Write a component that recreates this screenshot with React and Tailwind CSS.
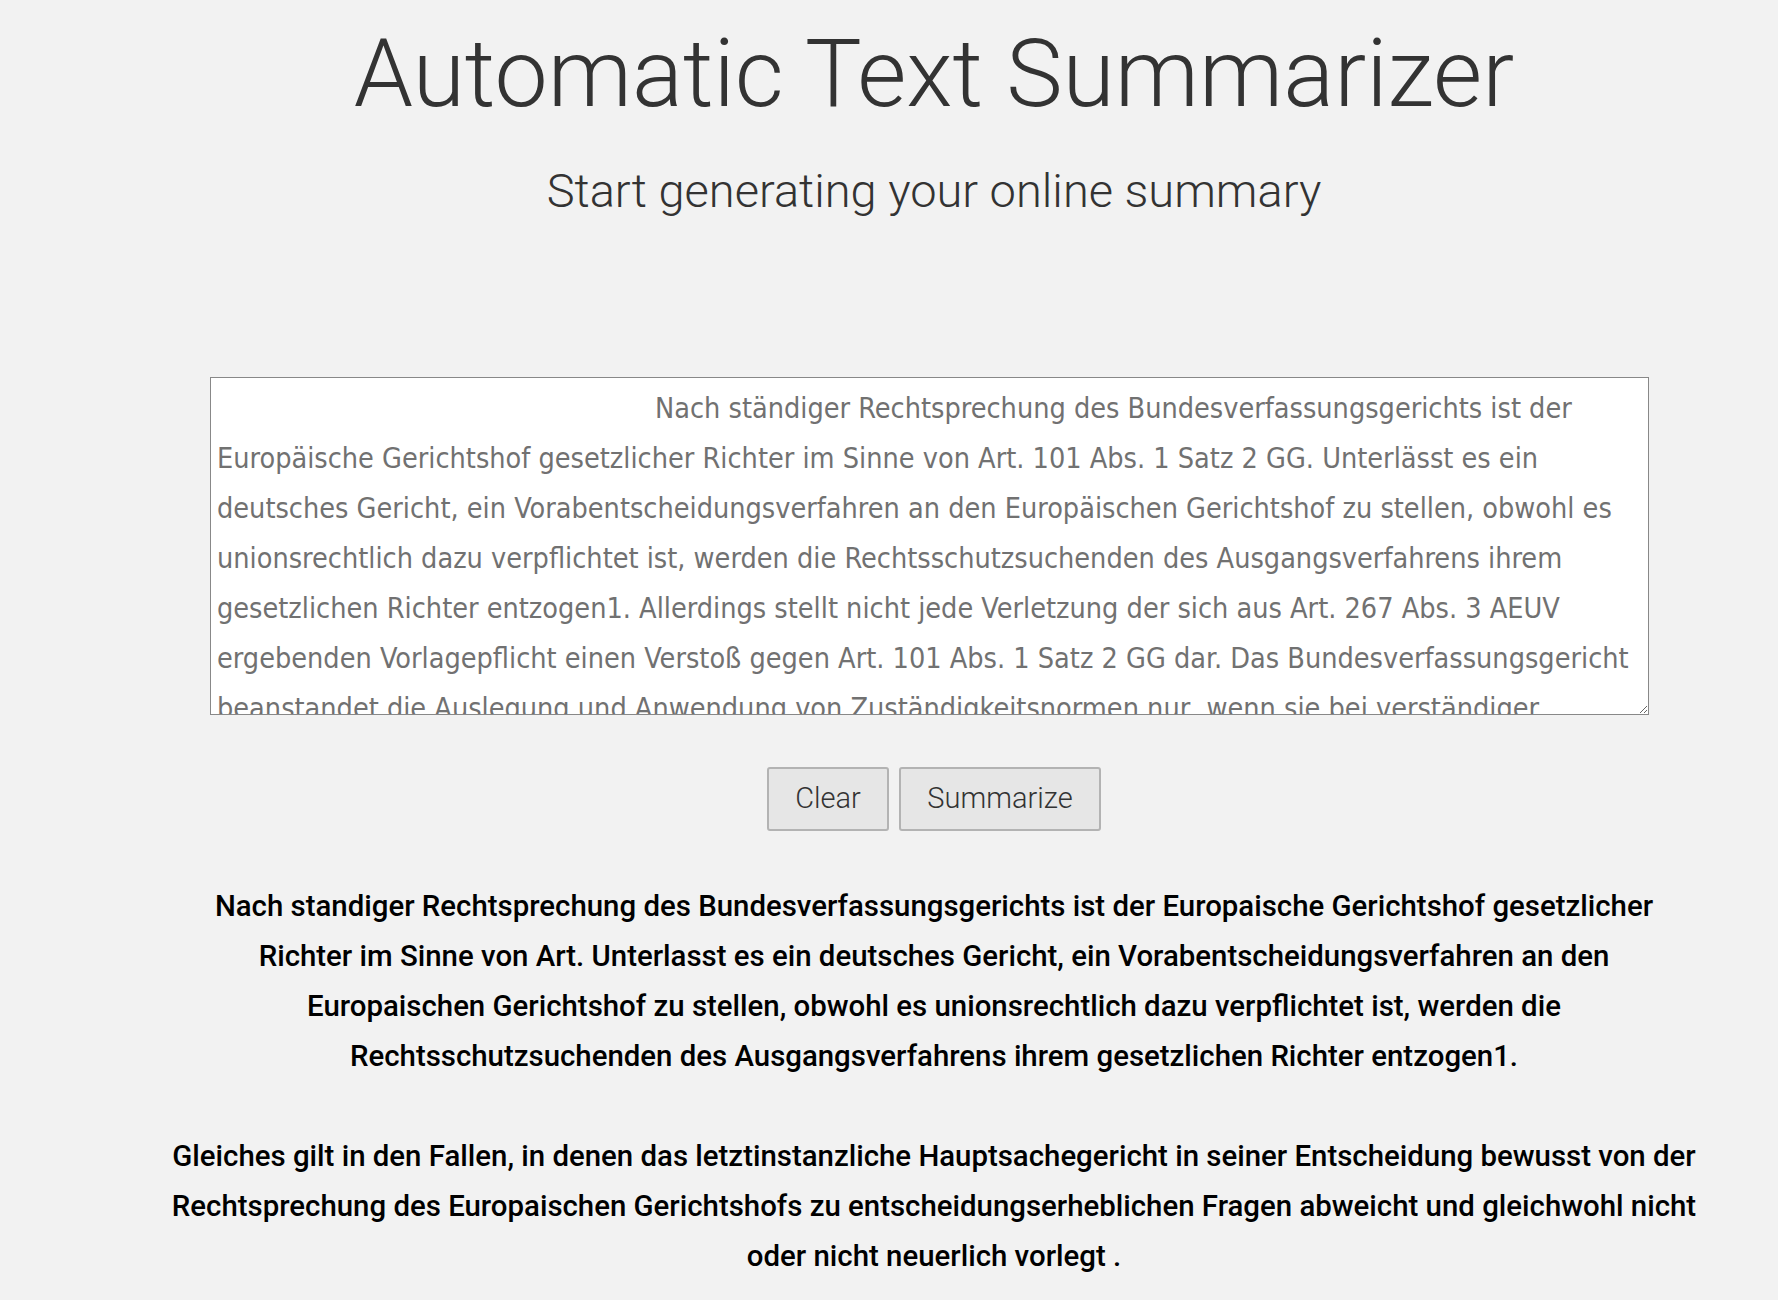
import React from "react";

const TA_TEXT = [
  "Nach ständiger Rechtsprechung des Bundesverfassungsgerichts ist der",
  "Europäische Gerichtshof gesetzlicher Richter im Sinne von Art. 101 Abs. 1 Satz 2 GG. Unterlässt es ein",
  "deutsches Gericht, ein Vorabentscheidungsverfahren an den Europäischen Gerichtshof zu stellen, obwohl es",
  "unionsrechtlich dazu verpflichtet ist, werden die Rechtsschutzsuchenden des Ausgangsverfahrens ihrem",
  "gesetzlichen Richter entzogen1. Allerdings stellt nicht jede Verletzung der sich aus Art. 267 Abs. 3 AEUV",
  "ergebenden Vorlagepflicht einen Verstoß gegen Art. 101 Abs. 1 Satz 2 GG dar. Das Bundesverfassungsgericht",
  "beanstandet die Auslegung und Anwendung von Zuständigkeitsnormen nur, wenn sie bei verständiger",
  "Würdigung der das Grundgesetz bestimmenden Gedanken nicht mehr verständlich erscheinen und",
  "offensichtlich unhaltbar sind.",
].join("\n");

export default function App() {
  return (
    <div className="min-h-[1300px] w-full bg-[#f2f2f2] pl-[90px] font-['Roboto',sans-serif]">
      <div className="flex flex-col items-center">
        <h1 className="mt-[24px] text-[95px] leading-[100px] font-light text-[#333333] whitespace-nowrap">
          Automatic Text Summarizer
        </h1>
        <h2 className="mt-[40px] text-[47px] leading-[54px] font-light text-[#333333] whitespace-nowrap">
          Start generating your online summary
        </h2>
        <textarea
          wrap="off"
          defaultValue={TA_TEXT}
          className="self-start ml-[120px] mt-[159px] block h-[338px] w-[1439px] border border-[#888888] bg-white pl-[6px] pr-[6px] pt-[5px] pb-[3px] indent-[438px] font-['DejaVu_Sans_Condensed','DejaVu_Sans',sans-serif] text-[28.55px] leading-[50px] text-[#717171] outline-none [scrollbar-width:none] overflow-hidden"
        />
        <div className="mt-[52px] flex gap-[10px]">
          <button className="h-[64px] w-[122px] rounded-[3px] border-2 border-[#b3b3b3] bg-[#e6e6e6] text-[29px] font-light text-[#333333]">
            Clear
          </button>
          <button className="h-[64px] w-[202px] rounded-[3px] border-2 border-[#b3b3b3] bg-[#e6e6e6] text-[29px] font-light text-[#333333]">
            Summarize
          </button>
        </div>
        <div className="mt-[50px] text-center text-[29.4px] leading-[50px] font-medium text-black">
          <p className="whitespace-nowrap">
            Nach standiger Rechtsprechung des Bundesverfassungsgerichts ist der Europaische Gerichtshof gesetzlicher
            <br />
            Richter im Sinne von Art. Unterlasst es ein deutsches Gericht, ein Vorabentscheidungsverfahren an den
            <br />
            Europaischen Gerichtshof zu stellen, obwohl es unionsrechtlich dazu verpflichtet ist, werden die
            <br />
            Rechtsschutzsuchenden des Ausgangsverfahrens ihrem gesetzlichen Richter entzogen1.
          </p>
          <p className="mt-[50px] whitespace-nowrap">
            Gleiches gilt in den Fallen, in denen das letztinstanzliche Hauptsachegericht in seiner Entscheidung bewusst von der
            <br />
            Rechtsprechung des Europaischen Gerichtshofs zu entscheidungserheblichen Fragen abweicht und gleichwohl nicht
            <br />
            oder nicht neuerlich vorlegt .
          </p>
        </div>
      </div>
    </div>
  );
}
